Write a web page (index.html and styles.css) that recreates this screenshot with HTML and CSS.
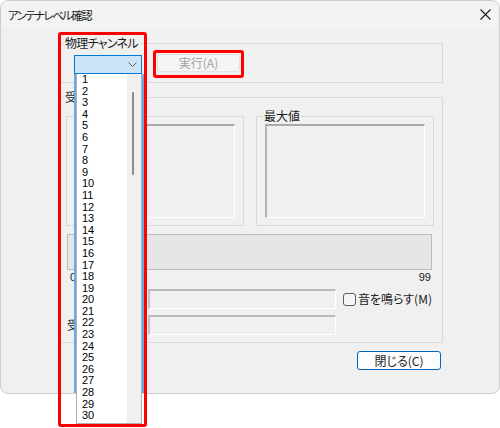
FILE: index.html
```html
<!DOCTYPE html>
<html lang="ja">

<head>
    <meta charset="UTF-8">
    <meta name="viewport" content="width=device-width, initial-scale=1.0">
    <title>アンテナレベル確認</title>
    <link rel="stylesheet" href="styles.css">
</head>

<body>
    <div class="window">
        <!---Title bar-->
        <div class="titlebar">
            <span class="title">アンテナレベル確認</span>
            <svg class="close-x" width="11" height="11" viewBox="0 0 11 11">
                <path d="M0.5 0.5 L10.5 10.5 M10.5 0.5 L0.5 10.5" stroke="#1b1b1b" stroke-width="1.1" fill="none" />
            </svg>
        </div>

        <div class="content">
            <div class="group top-group">
                <span class="group-label channel-label">物理チャンネル</span>
                <div class="combo">
                    <svg class="chevron" width="9" height="5" viewBox="0 0 9 5">
                        <polyline points="0.5,0.5 4.5,4.5 8.5,0.5" stroke="#5c5c5c" stroke-width="1" fill="none" />
                    </svg>
                </div>
                <button class="btn exec-btn" disabled>実行(A)</button>
            </div>

            <div class="group main-group">
                <span class="group-label">受</span>
                <div class="meters">
                    <div class="group meter">
                        <div class="display"></div>
                    </div>
                    <div class="group meter">
                        <span class="group-label">最大値</span>
                        <div class="display"></div>
                    </div>
                </div>
                <div class="level-bar"></div>
                <div class="scale"><span>0</span><span>99</span></div>
                <div class="field-row">
                    <span class="field-label"></span>
                    <div class="field"></div>
                    <label class="check"><span class="box"></span>音を鳴らす(M)</label>
                </div>
                <div class="field-row">
                    <span class="field-label">受</span>
                    <div class="field"></div>
                </div>
            </div>

            <div class="footer">
                <button class="btn close-btn">閉じる(C)</button>
            </div>
        </div>

        <!-- opened channel list -->
        <div class="focus-edge"></div>
        <div class="dropdown">
            <ul class="options">
                <li>1</li>
                <li>2</li>
                <li>3</li>
                <li>4</li>
                <li>5</li>
                <li>6</li>
                <li>7</li>
                <li>8</li>
                <li>9</li>
                <li>10</li>
                <li>11</li>
                <li>12</li>
                <li>13</li>
                <li>14</li>
                <li>15</li>
                <li>16</li>
                <li>17</li>
                <li>18</li>
                <li>19</li>
                <li>20</li>
                <li>21</li>
                <li>22</li>
                <li>23</li>
                <li>24</li>
                <li>25</li>
                <li>26</li>
                <li>27</li>
                <li>28</li>
                <li>29</li>
                <li>30</li>
            </ul>
            <div class="scrollbar">
                <div class="thumb"></div>
            </div>
        </div>

        <!-- red highlight frames -->
        <div class="mark mark-channel"></div>
        <div class="mark mark-exec"></div>
    </div>
</body>

</html>
```

FILE: styles.css
```css
* {
    box-sizing: border-box;
}

html,
body {
    min-height: 428px;
}

body {
    margin: 0;
    background-color: #ffffff;
    font-family: "Noto Sans CJK JP", "Noto Sans", sans-serif;
    font-size: 12px;
    font-feature-settings: "palt";
    color: #1a1a1a;
}

.window {
    position: relative;
    width: 500px;
    height: 394px;
    border: 1px solid #cccccc;
    border-radius: 8px;
    background-color: #f0f0f0;
}

/* Title bar */
.titlebar {
    height: 27px;
    display: flex;
    justify-content: space-between;
    align-items: center;
    padding: 0 8px 0 7px;
    background-color: #f3f3f3;
    border-radius: 7px 7px 0 0;
}

.title {
    font-size: 11.5px;
    letter-spacing: -1.6px;
    line-height: 16px;
}

.close-x {
    display: block;
}

.content {
    padding-left: 58px;
}

/* Group boxes */
.group {
    position: relative;
    border: 1px solid #d9d9d9;
}

.group-label {
    position: absolute;
    top: -8px;
    left: 4px;
    padding: 0 1px;
    line-height: 14px;
    background-color: #f0f0f0;
    white-space: nowrap;
}

.channel-label {
    letter-spacing: -0.7px;
}

.top-group {
    width: 384px;
    height: 40px;
    margin-top: 15px;
    display: flex;
    align-items: flex-start;
    padding-left: 14px;
}

.combo {
    width: 68px;
    height: 19px;
    margin-top: 11px;
    background-color: #cce4f7;
    border: 1px solid #0078d4;
    display: flex;
    justify-content: flex-end;
    align-items: center;
    padding-right: 4px;
}

.chevron {
    display: block;
}

.btn {
    font-family: inherit;
    font-size: 12px;
    font-feature-settings: "palt";
    padding: 0;
    line-height: 14px;
    border-radius: 3px;
}

.exec-btn {
    width: 83px;
    height: 18px;
    margin-top: 10px;
    margin-left: 15px;
    background-color: #f5f5f5;
    border: 1px solid #e2e2e2;
    color: #a0a0a0;
}

.main-group {
    width: 384px;
    height: 246px;
    margin-top: 14px;
    padding: 18px 0 0 6px;
}

.meters {
    display: flex;
    gap: 12px;
}

.meter {
    width: 178px;
    height: 110px;
    padding: 7px 8px 0;
}

.meter .group-label {
    left: 6px;
}

.display {
    height: 94px;
    border-top: 2px solid #a9a9a9;
    border-left: 2px solid #b4b4b4;
    border-right: 1px solid #ffffff;
    border-bottom: 1px solid #ffffff;
}

.level-bar {
    width: 365px;
    height: 36px;
    margin: 8px 0 0 1px;
    background-color: #e6e6e6;
    border: 1px solid #bcbcbc;
}

.scale {
    width: 365px;
    margin: 1px 0 0 1px;
    padding: 0 1px 0 3px;
    display: flex;
    justify-content: space-between;
    font-family: "Liberation Sans", Arial, sans-serif;
    font-size: 11px;
    line-height: 12px;
}

.field-row {
    display: flex;
    align-items: center;
    margin-top: 6px;
}

.field-label {
    width: 82px;
    padding-left: 1px;
    line-height: 14px;
    white-space: nowrap;
}

.field {
    width: 188px;
    height: 20px;
    border-top: 2px solid #b9b9b9;
    border-left: 2px solid #c2c2c2;
    border-right: 1px solid #ffffff;
    border-bottom: 1px solid #ffffff;
}

.check {
    display: flex;
    align-items: center;
    gap: 2px;
    margin-left: 7px;
    line-height: 14px;
}

.check .box {
    width: 13px;
    height: 13px;
    border: 1px solid #5a5a5a;
    border-radius: 3px;
    background-color: #f6f6f6;
}

.footer {
    width: 384px;
    margin-top: 8px;
    display: flex;
    justify-content: flex-end;
    padding-right: 2px;
}

.close-btn {
    width: 84px;
    height: 19px;
    background-color: #fdfdfd;
    border: 1px solid #0067c0;
    color: #1a1a1a;
}

/* Dropdown list */
.focus-edge {
    position: absolute;
    left: 73px;
    top: 73px;
    bottom: 0;
    width: 70px;
    border-left: 2px solid #6aaae8;
    border-right: 2px solid #6aaae8;
    z-index: 1;
}

.dropdown {
    position: absolute;
    left: 75px;
    top: 73px;
    width: 66px;
    height: 350px;
    display: flex;
    background-color: #ffffff;
    border: 1px solid #b0b0b0;
    border-top: none;
    z-index: 2;
}

.options {
    list-style: none;
    margin: 0;
    padding: 0 0 0 5px;
    flex: 1;
    font-family: "Liberation Sans", Arial, sans-serif;
    font-size: 11px;
    line-height: 11.6px;
    color: #000000;
}

.scrollbar {
    position: relative;
    width: 14px;
    background-color: #f0f0f0;
}

.thumb {
    position: absolute;
    left: 5px;
    top: 18px;
    width: 2px;
    height: 83px;
    border-radius: 1px;
    background-color: #8a8a8a;
}

/* Red highlight frames */
.mark {
    position: absolute;
    border: 3px solid #ff0000;
    border-radius: 3px;
    z-index: 3;
}

.mark-channel {
    left: 57px;
    top: 31px;
    width: 89px;
    height: 395px;
}

.mark-exec {
    left: 152px;
    top: 49px;
    width: 91px;
    height: 28px;
}
```
